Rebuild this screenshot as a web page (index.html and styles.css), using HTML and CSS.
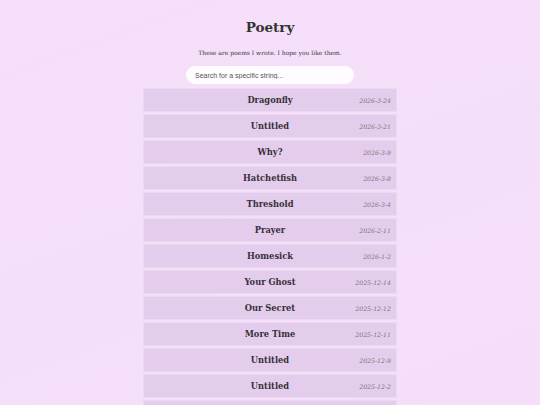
FILE: index.html
```html
<!DOCTYPE html>
<html>
<head>
<meta charset="utf-8">
<link rel="stylesheet" href="styles.css">
</head>
<body>
<div class="page">
  <h1 class="title">Poetry</h1>
  <p class="intro">These are poems I wrote. I hope you like them.</p>
  <input class="search" type="text" placeholder="Search for a specific string...">
  <ul class="poems">
    <li class="poem"><span class="name">Dragonfly</span><span class="date">2026-3-24</span></li>
    <li class="poem"><span class="name">Untitled</span><span class="date">2026-3-21</span></li>
    <li class="poem"><span class="name">Why?</span><span class="date">2026-3-9</span></li>
    <li class="poem"><span class="name">Hatchetfish</span><span class="date">2026-3-8</span></li>
    <li class="poem"><span class="name">Threshold</span><span class="date">2026-3-4</span></li>
    <li class="poem"><span class="name">Prayer</span><span class="date">2026-2-11</span></li>
    <li class="poem"><span class="name">Homesick</span><span class="date">2026-1-2</span></li>
    <li class="poem"><span class="name">Your Ghost</span><span class="date">2025-12-14</span></li>
    <li class="poem"><span class="name">Our Secret</span><span class="date">2025-12-12</span></li>
    <li class="poem"><span class="name">More Time</span><span class="date">2025-12-11</span></li>
    <li class="poem"><span class="name">Untitled</span><span class="date">2025-12-9</span></li>
    <li class="poem"><span class="name">Untitled</span><span class="date">2025-12-2</span></li>
    <li class="poem"><span class="name">Untitled</span><span class="date">2025-11-30</span></li>
  </ul>
</div>
</body>
</html>
```

FILE: styles.css
```css
html, body {
  margin: 0;
  padding: 0;
  height: 100%;
  overflow: hidden;
}
body {
  background: linear-gradient(160deg, #f7def9 0%, #f4dff9 50%, #f5defa 100%);
  font-family: "DejaVu Serif", "Liberation Serif", serif;
  color: #333;
}
.page {
  display: flex;
  flex-direction: column;
  align-items: center;
  padding-top: 18px;
}
.title {
  margin: 0;
  font-size: 13.5px;
  line-height: 18px;
  font-weight: bold;
  color: #333;
}
.intro {
  margin: 12px 0 0;
  font-size: 6px;
  line-height: 10px;
  color: #3a3a3a;
}
.search {
  margin-top: 8px;
  box-sizing: border-box;
  width: 168px;
  height: 18px;
  border: none;
  border-radius: 9px;
  background: #fefcfe;
  padding: 0 9px;
  font-family: "Liberation Sans", Arial, sans-serif;
  font-size: 7px;
  color: #444;
  outline: none;
}
.search::placeholder {
  color: #555;
}
.poems {
  list-style: none;
  margin: 4px 0 0;
  padding: 0;
  width: 254px;
  display: flex;
  flex-direction: column;
  gap: 2px;
}
.poem {
  box-sizing: border-box;
  height: 24px;
  background: #e4cdec;
  border: 1px solid rgba(255, 255, 255, 0.25);
  display: flex;
  align-items: center;
  justify-content: center;
  position: relative;
}
.name {
  font-size: 8.3px;
  font-weight: bold;
  color: #363038;
}
.date {
  position: absolute;
  right: 5px;
  top: 0;
  bottom: 0;
  display: flex;
  align-items: center;
  font-size: 6.2px;
  font-style: italic;
  color: #777277;
}
```
